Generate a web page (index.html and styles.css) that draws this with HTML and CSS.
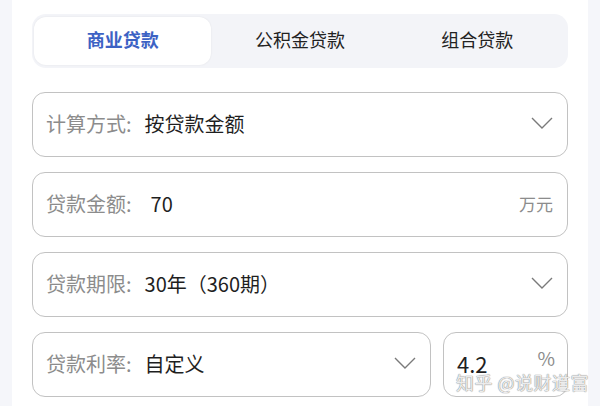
FILE: index.html
```html
<!DOCTYPE html>
<html lang="zh-CN">
<head>
    <meta charset="UTF-8">
    <meta name="viewport" content="width=device-width, initial-scale=1.0">
    <title>房贷计算器</title>
    <link rel="stylesheet" href="styles.css">
</head>
<body>
    <div class="panel">
        <div class="tabs">
            <div class="tab active">商业贷款</div>
            <div class="tab">公积金贷款</div>
            <div class="tab">组合贷款</div>
        </div>

        <div class="field">
            <span class="label">计算方式:</span>
            <span class="value">按贷款金额</span>
            <svg class="chevron" viewBox="0 0 22 12"><path d="M1 1 L11 11 L21 1"/></svg>
        </div>

        <div class="field">
            <span class="label">贷款金额:</span>
            <span class="value amount">70</span>
            <span class="unit">万元</span>
        </div>

        <div class="field">
            <span class="label">贷款期限:</span>
            <span class="value">30年（360期）</span>
            <svg class="chevron" viewBox="0 0 22 12"><path d="M1 1 L11 11 L21 1"/></svg>
        </div>

        <div class="field-row">
            <div class="field">
                <span class="label">贷款利率:</span>
                <span class="value">自定义</span>
                <svg class="chevron" viewBox="0 0 22 12"><path d="M1 1 L11 11 L21 1"/></svg>
            </div>
            <div class="field rate">
                <span class="value big">4.2</span>
                <span class="unit pct">%</span>
            </div>
        </div>
    </div>
    <div class="watermark">知乎 @说财道富</div>
</body>
</html>
```

FILE: styles.css
```css
body {
    margin: 0;
    background-color: #f5f6fa;
    font-family: "Noto Sans CJK SC", "Noto Sans", sans-serif;
    height: 406px;
    overflow: hidden;
    position: relative;
}
.panel {
    margin: 0 12px;
    background-color: white;
    padding: 14px 20px 0;
    height: 406px;
    box-sizing: border-box;
}
.tabs {
    display: grid;
    grid-template-columns: repeat(3, 1fr);
    height: 54px;
    padding: 3px 2px;
    box-sizing: border-box;
    background-color: #f3f4f8;
    border-radius: 14px;
    margin-bottom: 24px;
}
.tab {
    display: flex;
    align-items: center;
    justify-content: center;
    font-size: 18px;
    color: #222;
    border-radius: 12px;
    padding-bottom: 4px;
}
.tab.active {
    background-color: white;
    color: #3c62c4;
    font-weight: bold;
    box-shadow: 0 0 2px rgba(0,0,0,0.08);
}
.field {
    display: flex;
    align-items: center;
    height: 65px;
    box-sizing: border-box;
    border: 1.5px solid #c2c2c2;
    border-radius: 13px;
    padding: 0 14px 3px 13px;
    margin-bottom: 15px;
    font-size: 20px;
}
.label {
    color: #8c8c8c;
    margin-right: 13px;
}
.value {
    color: #1f1f1f;
    flex: 1;
}
.value.amount {
    margin-left: 6px;
}
.value.big {
    font-size: 22px;
}
.unit {
    color: #8c8c8c;
    font-size: 17px;
}
.chevron {
    width: 22px;
    height: 12px;
    fill: none;
    stroke: #7a7a7a;
    stroke-width: 1.4;
}
.field-row {
    display: flex;
    gap: 12px;
}
.field-row .field {
    flex: 1;
}
.field-row .field.rate {
    flex: 0 0 125px;
    padding-right: 12px;
}
.pct {
    font-size: 19px;
    position: relative;
    top: -6px;
}
.watermark {
    position: absolute;
    left: 456px;
    top: 369px;
    font-size: 18px;
    color: rgba(255,255,255,0.85);
    text-shadow: 0 0 1px #888, 0 0 1px #888;
    letter-spacing: 0.5px;
}
```
